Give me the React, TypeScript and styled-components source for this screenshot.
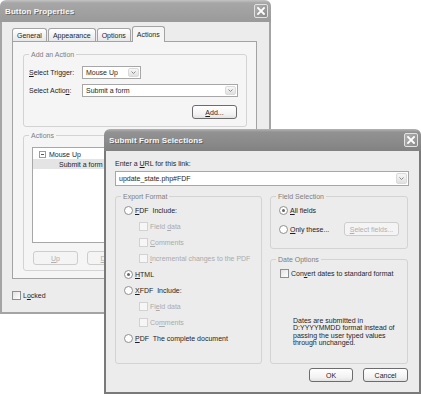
import { FC } from 'react'
import styled, { createGlobalStyle } from 'styled-components'

const GlobalStyle = createGlobalStyle`
  html, body {
    margin: 0;
    padding: 0;
    background: #fff;
  }
  body {
    font-family: 'Liberation Sans', Arial, sans-serif;
    font-size: 7px;
    line-height: 9px;
    color: #1f1f1f;
  }
  * {
    box-sizing: border-box;
  }
`

const Desktop = styled.div`
  position: relative;
  width: 421px;
  height: 396px;
  overflow: hidden;
  background: #fff;
`

// windows sit on a free canvas, so they get absolute coordinates
const Win = styled.div<{ $x: number; $y: number; $w: number; $h: number }>`
  position: absolute;
  left: ${p => p.$x}px;
  top: ${p => p.$y}px;
  width: ${p => p.$w}px;
  height: ${p => p.$h}px;
  display: flex;
  flex-direction: column;
`

const TitleBar = styled.div<{ $active?: boolean }>`
  flex: none;
  height: 22px;
  display: flex;
  align-items: center;
  justify-content: space-between;
  padding: 0 3px 0 5px;
  border-radius: 6px 6px 0 0;
  background: ${p =>
    p.$active
      ? 'linear-gradient(#b4b4b4, #929292 3px, #8a8a8a 60%, #828282)'
      : 'linear-gradient(#c4c4c4, #a6a6a6 3px, #a0a0a0 60%, #9a9a9a)'};
`

const TitleText = styled.span`
  font-size: 8px;
  font-weight: bold;
  color: #f6f6f6;
  text-shadow: 1px 1px 0 rgba(70, 70, 70, 0.6);
  letter-spacing: 0.1px;
`

const CloseBox = styled.span`
  width: 14px;
  height: 14px;
  display: flex;
  align-items: center;
  justify-content: center;
  border: 1px solid #e2e2e2;
  border-radius: 2px;
  background: linear-gradient(135deg, #b0b0b0, #8c8c8c);
`

const Frame = styled.div<{ $active?: boolean }>`
  flex: 1;
  display: flex;
  flex-direction: column;
  background: #ececec;
  border: 2px solid ${p => (p.$active ? '#7a7a7a' : '#a4a4a4')};
  border-top: 0;
`

const BackBody = styled(Frame)`
  padding: 4px 12px 0 10px;
`

const FrontBody = styled(Frame)`
  padding: 8px 10px 10px 9px;
`

const TabStrip = styled.div`
  display: flex;
  align-items: flex-end;
  height: 15px;
  padding-left: 0;
`

const Tab = styled.div<{ $active?: boolean }>`
  position: relative;
  height: ${p => (p.$active ? 16 : 13)}px;
  margin-bottom: ${p => (p.$active ? -1 : 0)}px;
  margin-right: 1px;
  padding: 0 4px;
  display: flex;
  align-items: center;
  border: 1px solid #a3a3a3;
  border-bottom: 0;
  border-radius: 3px 3px 0 0;
  background: ${p => (p.$active ? '#f5f5f5' : 'linear-gradient(#ffffff, #e7e7e7)')};
  z-index: ${p => (p.$active ? 1 : 0)};
`

const TabPanel = styled.div`
  height: 238px;
  border: 1px solid #a3a3a3;
  background: #f5f5f5;
  padding: 8px 9px 0 10px;
  display: flex;
  flex-direction: column;
  gap: 4px;
`

const Group = styled.fieldset<{ $h: number }>`
  margin: 0;
  height: ${p => p.$h}px;
  min-width: 0;
  border: 1px solid #d3d3d3;
  border-radius: 3px;
  padding: 0;
`

const Legend = styled.legend`
  margin-left: 5px;
  padding: 0 2px;
  color: #7e7e7e;
  line-height: 9px;
`

const GroupInner = styled.div<{ $pad: string; $gap?: number }>`
  display: flex;
  flex-direction: column;
  gap: ${p => p.$gap ?? 0}px;
  padding: ${p => p.$pad};
`

const FieldRow = styled.div`
  display: flex;
  align-items: center;
  height: 13px;
`

const FieldLabel = styled.span`
  width: 53px;
  flex: none;
`

const Combo = styled.div<{ $w: number; $h: number }>`
  width: ${p => p.$w}px;
  height: ${p => p.$h}px;
  display: flex;
  align-items: stretch;
  background: #fff;
  border: 1px solid #a7a7a7;
`

const ComboText = styled.span`
  flex: 1;
  display: flex;
  align-items: center;
  padding-left: 3px;
`

const DropArrow = styled.span`
  width: 11px;
  margin: 1px;
  display: flex;
  align-items: center;
  justify-content: center;
  border: 1px solid #dadada;
  border-radius: 2px;
  background: linear-gradient(#f7f7f7, #e0e0e0);
`

const ButtonRow = styled.div<{ $gap: number; $end?: boolean }>`
  display: flex;
  gap: ${p => p.$gap}px;
  justify-content: ${p => (p.$end ? 'flex-end' : 'flex-start')};
`

const Button = styled.span<{ $w: number; $off?: boolean }>`
  width: ${p => p.$w}px;
  height: 14px;
  display: flex;
  align-items: center;
  justify-content: center;
  border: 1px solid ${p => (p.$off ? '#cdcdcd' : '#6c6c6c')};
  border-radius: 3px;
  background: ${p => (p.$off ? '#f4f4f4' : 'linear-gradient(#ffffff, #f2f2f2 70%, #e2e2e2)')};
  color: ${p => (p.$off ? '#b0b0b0' : '#1f1f1f')};
`

const TreeBox = styled.div`
  height: 96px;
  background: #fff;
  border: 1px solid #a7a7a7;
  padding-top: 1px;
`

const TreeItem = styled.div<{ $selected?: boolean; $indent: number }>`
  height: 10px;
  display: flex;
  align-items: center;
  gap: 3px;
  padding-left: ${p => p.$indent}px;
  background: ${p => (p.$selected ? '#e4e4e4' : 'transparent')};
`

const Expander = styled.span`
  width: 7px;
  height: 7px;
  border: 1px solid #9c9c9c;
  display: flex;
  align-items: center;
  justify-content: center;
  &::after {
    content: '';
    width: 3px;
    height: 1px;
    background: #555;
  }
`

const LockRow = styled.div`
  display: flex;
  align-items: center;
  gap: 2px;
  margin-top: 12px;
`

const Radio = styled.span<{ $checked?: boolean }>`
  flex: none;
  width: 9px;
  height: 9px;
  border-radius: 50%;
  border: 1px solid #8f8f8f;
  background: #fff;
  display: flex;
  align-items: center;
  justify-content: center;
  &::after {
    content: '';
    width: 3px;
    height: 3px;
    border-radius: 50%;
    background: ${p => (p.$checked ? '#666' : 'transparent')};
  }
`

const Check = styled.span<{ $off?: boolean }>`
  flex: none;
  width: 9px;
  height: 9px;
  border: 1px solid ${p => (p.$off ? '#d2d2d2' : '#8f8f8f')};
  background: ${p => (p.$off ? '#f6f6f6' : 'linear-gradient(135deg, #e2e2e2, #ffffff)')};
`

const Option = styled.div<{ $indent?: number; $h?: number }>`
  display: flex;
  align-items: center;
  gap: 2px;
  height: ${p => p.$h ?? 16}px;
  padding-left: ${p => p.$indent ?? 0}px;
  white-space: nowrap;
`

const OptText = styled.span<{ $off?: boolean }>`
  color: ${p => (p.$off ? '#ababab' : '#1f1f1f')};
`

const Columns = styled.div`
  display: grid;
  grid-template-columns: 147px 138px;
  gap: 8px;
  margin-top: 6px;
`

const RightColumn = styled.div`
  display: flex;
  flex-direction: column;
  gap: 6px;
`

const Note = styled.p`
  margin: 37px 0 0 13px;
  line-height: 7.4px;
`

const UrlLabel = styled.div`
  height: 9px;
  margin-bottom: 3px;
`

const Chevron: FC = () => (
  <svg width="5" height="3" viewBox="0 0 5 3">
    <path d="M0.5 0.5 L2.5 2.5 L4.5 0.5" fill="none" stroke="#8a8a8a" strokeWidth="1" />
  </svg>
)

const CloseX: FC = () => (
  <svg width="8" height="8" viewBox="0 0 8 8">
    <path d="M1 1 L7 7 M7 1 L1 7" stroke="#fff" strokeWidth="1.8" strokeLinecap="square" />
  </svg>
)

const ButtonProperties: FC = () => (
  <Win $x={0} $y={0} $w={271} $h={314}>
    <TitleBar>
      <TitleText>Button Properties</TitleText>
      <CloseBox>
        <CloseX />
      </CloseBox>
    </TitleBar>
    <BackBody>
      <TabStrip>
        <Tab>General</Tab>
        <Tab>Appearance</Tab>
        <Tab>Options</Tab>
        <Tab $active>Actions</Tab>
      </TabStrip>
      <TabPanel>
        <Group $h={77}>
          <Legend>Add an Action</Legend>
          <GroupInner $pad={'7px 8px 0 5px'} $gap={5}>
            <FieldRow>
              <FieldLabel>
                <u>S</u>elect Trigger:
              </FieldLabel>
              <Combo $w={59} $h={13}>
                <ComboText>Mouse Up</ComboText>
                <DropArrow>
                  <Chevron />
                </DropArrow>
              </Combo>
            </FieldRow>
            <FieldRow>
              <FieldLabel>
                Select Actio<u>n</u>:
              </FieldLabel>
              <Combo $w={156} $h={13}>
                <ComboText>Submit a form</ComboText>
                <DropArrow>
                  <Chevron />
                </DropArrow>
              </Combo>
            </FieldRow>
            <ButtonRow $gap={0} $end style={{ marginTop: 3, paddingRight: 1 }}>
              <Button $w={45}>
                <span>
                  <u>A</u>dd...
                </span>
              </Button>
            </ButtonRow>
          </GroupInner>
        </Group>
        <Group $h={140}>
          <Legend>Actions</Legend>
          <GroupInner $pad={'7px 8px 0 8px'} $gap={8}>
            <TreeBox>
              <TreeItem $indent={6}>
                <Expander />
                <span>Mouse Up</span>
              </TreeItem>
              <TreeItem $indent={26} $selected>
                <span>Submit a form</span>
              </TreeItem>
            </TreeBox>
            <ButtonRow $gap={9} style={{ paddingLeft: 1 }}>
              <Button $w={45} $off>
                <u>U</u>p
              </Button>
              <Button $w={45} $off>
                <u>D</u>own
              </Button>
            </ButtonRow>
          </GroupInner>
        </Group>
      </TabPanel>
      <LockRow>
        <Check />
        <span>
          L<u>o</u>cked
        </span>
      </LockRow>
    </BackBody>
  </Win>
)

const SubmitForm: FC = () => (
  <Win $x={104} $y={129} $w={317} $h={265}>
    <TitleBar $active>
      <TitleText>Submit Form Selections</TitleText>
      <CloseBox>
        <CloseX />
      </CloseBox>
    </TitleBar>
    <FrontBody $active>
      <UrlLabel>
        Enter a <u>U</u>RL for this link:
      </UrlLabel>
      <Combo $w={294} $h={15}>
        <ComboText>update_state.php#FDF</ComboText>
        <DropArrow>
          <Chevron />
        </DropArrow>
      </Combo>
      <Columns>
        <Group $h={172}>
          <Legend>Export Format</Legend>
          <GroupInner $pad={'1px 0 0 8px'}>
            <Option>
              <Radio />
              <OptText>
                <u>F</u>DF&nbsp; Include:
              </OptText>
            </Option>
            <Option $indent={15}>
              <Check $off />
              <OptText $off>
                Field <u>d</u>ata
              </OptText>
            </Option>
            <Option $indent={15}>
              <Check $off />
              <OptText $off>
                <u>C</u>omments
              </OptText>
            </Option>
            <Option $indent={15}>
              <Check $off />
              <OptText $off>
                <u>I</u>ncremental changes to the PDF
              </OptText>
            </Option>
            <Option>
              <Radio $checked />
              <OptText>
                <u>H</u>TML
              </OptText>
            </Option>
            <Option>
              <Radio />
              <OptText>
                <u>X</u>FDF&nbsp; Include:
              </OptText>
            </Option>
            <Option $indent={15}>
              <Check $off />
              <OptText $off>
                Fi<u>e</u>ld data
              </OptText>
            </Option>
            <Option $indent={15}>
              <Check $off />
              <OptText $off>
                Co<u>m</u>ments
              </OptText>
            </Option>
            <Option>
              <Radio />
              <OptText>
                <u>P</u>DF&nbsp; The complete document
              </OptText>
            </Option>
          </GroupInner>
        </Group>
        <RightColumn>
          <Group $h={57}>
            <Legend>Field Selection</Legend>
            <GroupInner $pad={'2px 8px 0 8px'} $gap={5}>
              <Option $h={14}>
                <Radio $checked />
                <OptText>
                  <u>A</u>ll fields
                </OptText>
              </Option>
              <Option $h={14}>
                <Radio />
                <OptText>
                  <u>O</u>nly these...
                </OptText>
                <Button $w={55} $off style={{ marginLeft: 'auto' }}>
                  <u>S</u>elect fields...
                </Button>
              </Option>
            </GroupInner>
          </Group>
          <Group $h={109}>
            <Legend>Date Options</Legend>
            <GroupInner $pad={'2px 6px 0 9px'}>
              <Option $h={14}>
                <Check />
                <OptText>
                  Con<u>v</u>ert dates to standard format
                </OptText>
              </Option>
              <Note>
                Dates are submitted in
                <br />
                D:YYYYMMDD format instead of
                <br />
                passing the user typed values
                <br />
                through unchanged.
              </Note>
            </GroupInner>
          </Group>
        </RightColumn>
      </Columns>
      <ButtonRow $gap={10} $end style={{ marginTop: 4, paddingRight: 1 }}>
        <Button $w={44}>OK</Button>
        <Button $w={45}>Cancel</Button>
      </ButtonRow>
    </FrontBody>
  </Win>
)

const App: FC = () => {
  return (
    <>
      <GlobalStyle />
      <Desktop>
        <ButtonProperties />
        <SubmitForm />
      </Desktop>
    </>
  )
}

export default App
